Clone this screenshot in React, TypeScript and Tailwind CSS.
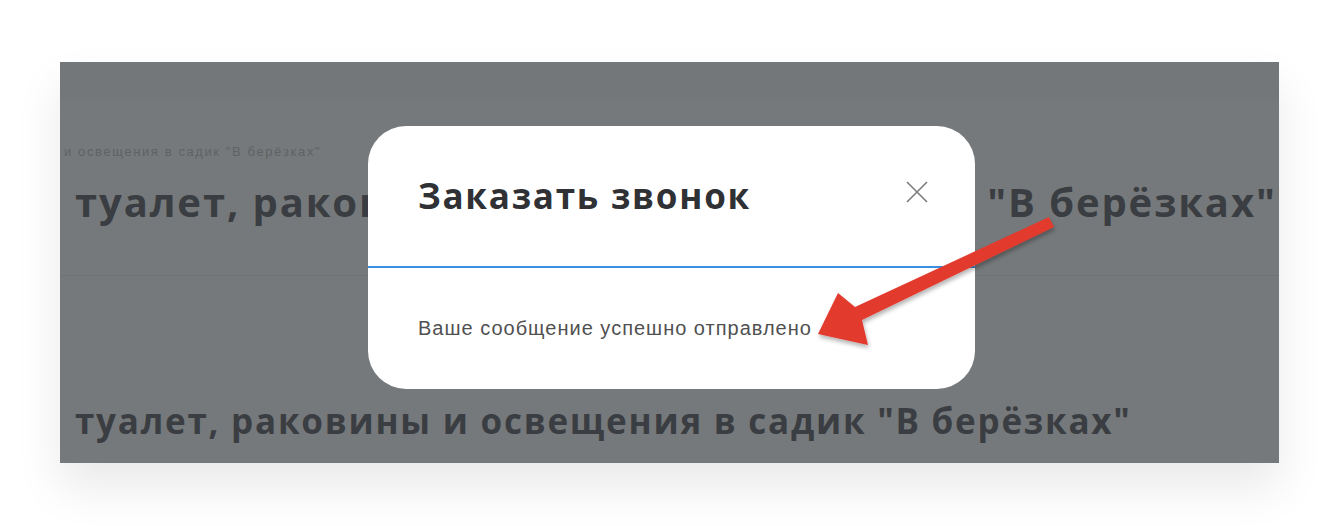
import React from 'react'

const headingFont = { fontFamily: '"Open Sans", "DejaVu Sans", sans-serif' }
const textFont = { fontFamily: '"Liberation Sans", Arial, sans-serif' }

function Arrow() {
  return (
    <svg className="pointer-events-none absolute left-0 top-0" width="1340" height="526" viewBox="0 0 1340 526">
      <defs>
        <filter id="ash" x="-10%" y="-10%" width="130%" height="140%">
          <feDropShadow dx="1" dy="3" stdDeviation="2" floodColor="#000" floodOpacity="0.3" />
        </filter>
      </defs>
      <polygon
        filter="url(#ash)"
        fill="#e23a2e"
        points="818,334 838,293 855,307 1049,217 1054,227 862,320 868,345"
      />
    </svg>
  )
}

export default function App() {
  return (
    <div className="relative h-[526px] w-[1340px] overflow-hidden bg-white">
      <div className="ml-[60px] mt-[62px] h-[401px] w-[1219px] overflow-hidden bg-[#76797b] shadow-[0_24px_44px_rgba(0,0,0,0.09)]">
        <div className="h-[38px] bg-[#74777a]" />
        <div className="flex h-[176px] flex-col border-b border-[#707375] pl-[4px] pt-[44px]">
          <p className="text-[13px] leading-4 tracking-[1.6px] text-[#5f6265]" style={textFont}>
            и освещения в садик "В берёзках"
          </p>
          <h1 className="mt-[18px] whitespace-nowrap pl-[11px] text-[40px] font-bold leading-[48px] tracking-[0.047em] text-[#3a3d41]" style={headingFont}>
            туалет, раковины и освещения в садик "В берёзках"
          </h1>
        </div>
        <h2 className="mt-[124px] whitespace-nowrap pl-[15px] text-[35px] font-bold leading-[42px] tracking-[0.05em] text-[#3a3d41]" style={headingFont}>
          туалет, раковины и освещения в садик "В берёзках"
        </h2>
      </div>

      <div className="absolute left-[368px] top-[126px] h-[263px] w-[607px] overflow-hidden rounded-[38px] bg-white">
        <div className="flex h-[142px] items-start justify-between border-b-2 border-[#3b8fe0] pl-[50px] pr-[46px] pt-[48px]">
          <h3 className="text-[35px] font-bold leading-[44px] tracking-[0.05em] text-[#2f3134]" style={headingFont}>
            Заказать звонок
          </h3>
          <svg width="24" height="24" viewBox="0 0 24 24" className="mt-[6px]">
            <path d="M2 2 L22 22 M22 2 L2 22" stroke="#7c7c7c" strokeWidth="1.6" />
          </svg>
        </div>
        <p className="pl-[50px] pt-[48px] text-[20px] leading-6 tracking-[1px] text-[#505050]" style={textFont}>
          Ваше сообщение успешно отправлено
        </p>
      </div>

      <Arrow />
    </div>
  )
}
